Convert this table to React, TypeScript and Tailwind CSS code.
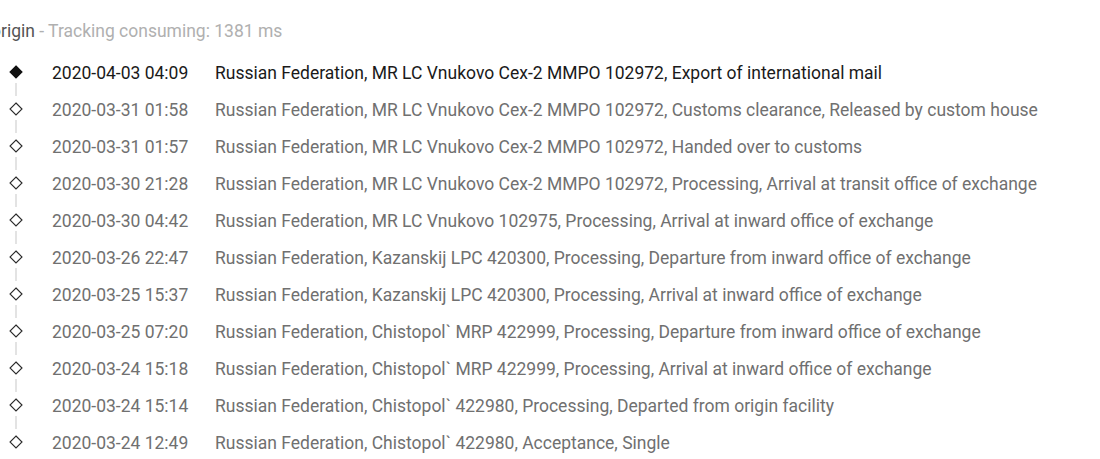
const events = [
  ["2020-04-03 04:09", "Russian Federation, MR LC Vnukovo Cex-2 MMPO 102972, Export of international mail"],
  ["2020-03-31 01:58", "Russian Federation, MR LC Vnukovo Cex-2 MMPO 102972, Customs clearance, Released by custom house"],
  ["2020-03-31 01:57", "Russian Federation, MR LC Vnukovo Cex-2 MMPO 102972, Handed over to customs"],
  ["2020-03-30 21:28", "Russian Federation, MR LC Vnukovo Cex-2 MMPO 102972, Processing, Arrival at transit office of exchange"],
  ["2020-03-30 04:42", "Russian Federation, MR LC Vnukovo 102975, Processing, Arrival at inward office of exchange"],
  ["2020-03-26 22:47", "Russian Federation, Kazanskij LPC 420300, Processing, Departure from inward office of exchange"],
  ["2020-03-25 15:37", "Russian Federation, Kazanskij LPC 420300, Processing, Arrival at inward office of exchange"],
  ["2020-03-25 07:20", "Russian Federation, Chistopol` MRP 422999, Processing, Departure from inward office of exchange"],
  ["2020-03-24 15:18", "Russian Federation, Chistopol` MRP 422999, Processing, Arrival at inward office of exchange"],
  ["2020-03-24 15:14", "Russian Federation, Chistopol` 422980, Processing, Departed from origin facility"],
  ["2020-03-24 12:49", "Russian Federation, Chistopol` 422980, Acceptance, Single"],
];

function Diamond({ filled }: { filled: boolean }) {
  return (
    <svg width="14" height="14" viewBox="0 0 14 14" className="block">
      <polygon
        points="7,1 13,7 7,13 1,7"
        fill={filled ? "#111" : "#fff"}
        stroke={filled ? "#111" : "#2a2a2a"}
        strokeWidth="1.1"
      />
    </svg>
  );
}

export default function App() {
  return (
    <div className="h-[459px] w-[1100px] overflow-hidden bg-white font-['Roboto',sans-serif] text-[17.5px]">
      <div className="mt-[19px] -ml-[9px] h-[24px] whitespace-nowrap leading-[24px]">
        <span className="text-[#555]">origin</span>
        <span className="text-[#b0b0b0]"> - Tracking consuming: 1381 ms</span>
      </div>

      <div className="mt-[12px]">
        {events.map(([time, desc], i) => {
          const first = i === 0;
          const last = i === events.length - 1;
          return (
            <div key={time + i} className="flex h-[37px] items-start">
              <div className="flex w-[52px] flex-col items-center pt-[10px] pr-[20px]">
                <Diamond filled={first} />
                {!last && <div className="mt-[4px] h-[13px] w-[2px] bg-[#e3e3e3]" />}
              </div>
              <div
                className={`w-[163px] shrink-0 leading-[37px] ${
                  first ? "text-[#1a1a1a]" : "text-[#707070]"
                }`}
              >
                {time}
              </div>
              <div
                className={`whitespace-nowrap leading-[37px] ${
                  first ? "text-[#1a1a1a]" : "text-[#707070]"
                }`}
              >
                {desc}
              </div>
            </div>
          );
        })}
      </div>
    </div>
  );
}
